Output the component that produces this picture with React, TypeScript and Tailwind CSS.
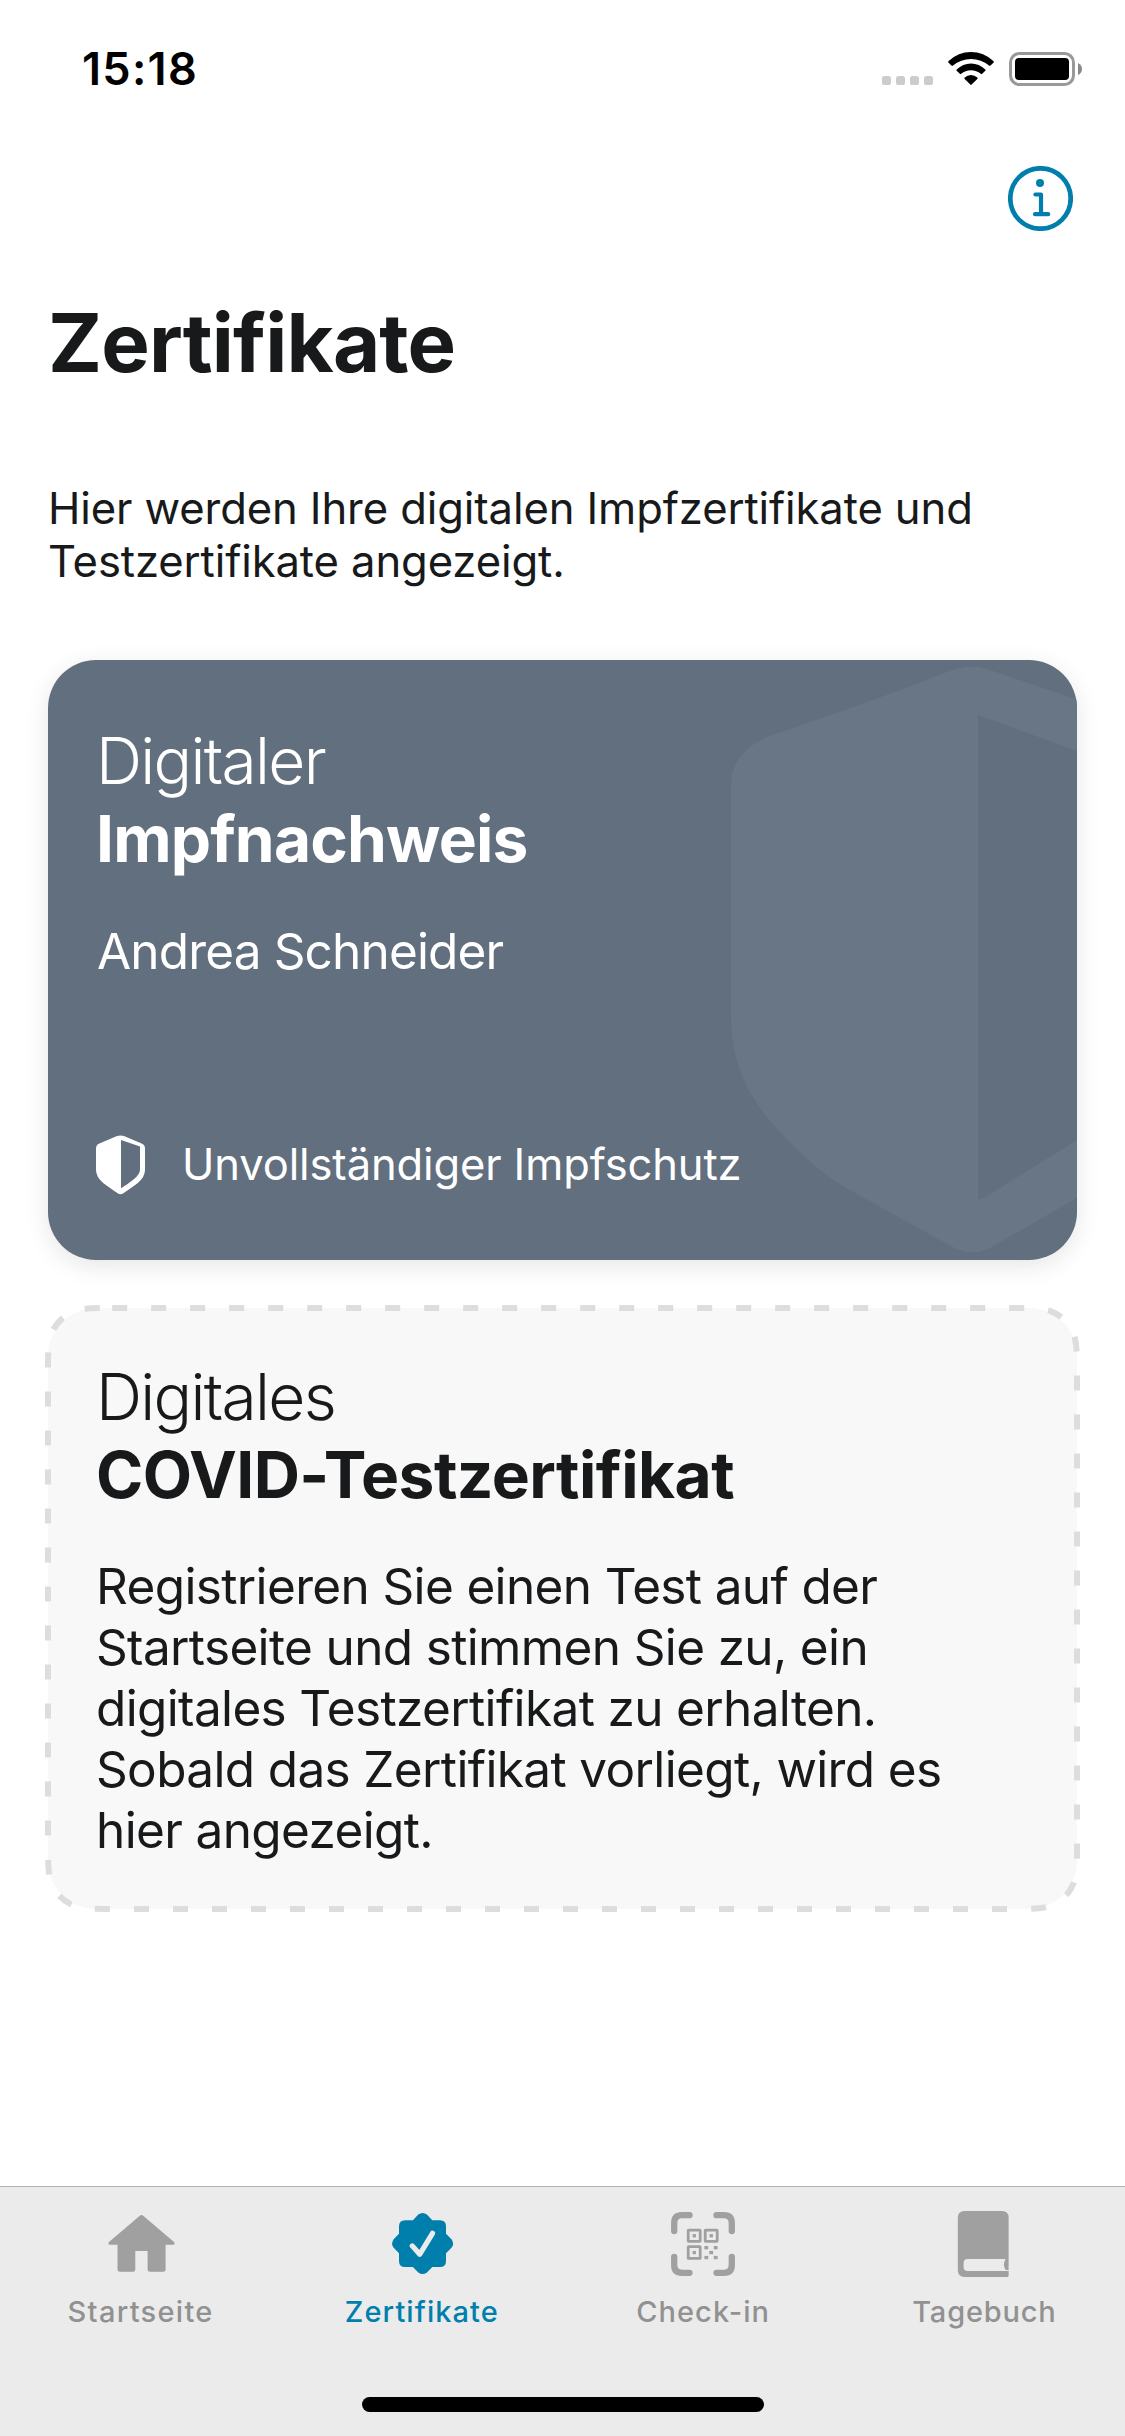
import type { ReactNode } from 'react';

function StatusBar() {
  return (
    <div className="flex h-[166px] items-start justify-between">
      <time className="pt-[39px] pl-[82px] text-[45px] leading-[60px] font-semibold tracking-[1.3px] text-black">15:18</time>
      <div className="flex items-start pt-[52px] pr-[42px]">
        <svg className="mt-6 h-[9px] w-[51px]" viewBox="0 0 51 9" fill="#cccccc">
          <rect x="0" width="9" height="9" rx="2.6" />
          <rect x="14" width="9" height="9" rx="2.6" />
          <rect x="28" width="9" height="9" rx="2.6" />
          <rect x="42" width="9" height="9" rx="2.6" />
        </svg>
        <svg className="ml-[15px] h-[33px] w-[46px]" viewBox="0 0 46 33" fill="#000">
          <path d="M0.6 9.1 Q10.2 0 23 0 Q35.8 0 45.4 9.1 Q46.2 9.9 45.4 10.7 L42.5 13.6 Q41.8 14.3 41 13.6 Q33.3 6.9 23 6.9 Q12.7 6.9 5 13.6 Q4.2 14.3 3.5 13.6 L0.6 10.7 Q-0.2 9.9 0.6 9.1Z" />
          <path d="M8.7 17.4 Q14.8 11.4 23 11.4 Q31.2 11.4 37.3 17.4 Q38 18.1 37.3 18.8 L34.2 21.8 Q33.5 22.5 32.8 21.8 Q28.6 18.2 23 18.2 Q17.4 18.2 13.2 21.8 Q12.5 22.5 11.8 21.8 L8.7 18.8 Q8 18.1 8.7 17.4Z" />
          <path d="M16.7 25.5 Q19.5 23 23 23 Q26.5 23 29.3 25.5 Q30 26.2 29.3 26.9 L23.7 32.5 Q23 33.2 22.3 32.5 L16.7 26.9 Q16 26.2 16.7 25.5Z" />
        </svg>
        <svg className="ml-[15px] h-[34px] w-[74px]" viewBox="0 0 74 34">
          <rect x="1.5" y="1.5" width="63" height="31" rx="9" fill="none" stroke="#999999" strokeWidth="3" />
          <rect x="6" y="6" width="54" height="22" rx="4" fill="#000" />
          <path d="M69 11 Q73 13 73 17 Q73 21 69 23Z" fill="#888888" />
        </svg>
      </div>
    </div>
  );
}

function InfoIcon() {
  return (
    <svg className="h-[65px] w-[65px]" viewBox="0 0 65 65" fill="none" stroke="#007fad" strokeLinecap="round" strokeLinejoin="round">
      <circle cx="32.5" cy="32.5" r="30.2" strokeWidth="4.7" />
      <circle cx="32" cy="17" r="4" fill="#007fad" stroke="none" />
      <path d="M27.4 28.5 H33 V48.2 M27 48.2 H40.2" strokeWidth="4.2" />
    </svg>
  );
}

function ShieldWatermark() {
  return (
    <svg className="absolute top-0 right-0 h-[600px] w-[346px]" viewBox="683 0 346 600" fill="#697685">
      <path
        fillRule="evenodd"
        d="M683 125 Q683 93 719 77 C760 63 850 32 899 12 Q924 2 945 11 L1029 39.5 L1115 72 V540 L1029 538 L942 588 Q922 598 899 584 L809 534 C768 512 748 488 729 469 C700 437 683 402 683 357Z M930 55 V539 H934 L1029 480 V91Z"
      />
    </svg>
  );
}

function ShieldIcon() {
  return (
    <svg className="h-[60px] w-[49px]" viewBox="0 0 49 60" fill="#fff">
      <path
        fillRule="evenodd"
        d="M0 13.5 Q0 9.8 3.4 8.5 L21 1 Q24.5 0 28 1 L45.6 8.5 Q49 9.8 49 13.5 V35 Q49 42 41.5 48.3 Q36 52.5 27 58.5 Q24.5 60 22 58.5 Q13 52.5 7.5 48.3 Q0 42 0 35Z M25 5 V53.3 Q32 49 37.5 44.5 Q44 39.3 44 34.5 V11.5Z"
      />
    </svg>
  );
}

/* Dashed outline with continuous-curvature corners, centred on the card edge. */
function DashedOutline() {
  return (
    <svg className="pointer-events-none absolute inset-0 h-[601px] w-[1029px] overflow-visible" viewBox="0 0 1029 601" fill="none">
      <path
        d="M64.2 0 H964.8 C983.3 0 992.5 0 1002.5 3.1 C1013.3 7.1 1021.9 15.7 1025.9 26.5 C1029 36.5 1029 45.7 1029 64.2 V536.8 C1029 555.3 1029 564.5 1025.9 574.5 C1021.9 585.3 1013.3 593.9 1002.5 597.9 C992.5 601 983.3 601 964.8 601 H64.2 C45.7 601 36.5 601 26.5 597.9 C15.7 593.9 7.1 585.3 3.1 574.5 C0 564.5 0 555.3 0 536.8 V64.2 C0 45.7 0 36.5 3.1 26.5 C7.1 15.7 15.7 7.1 26.5 3.1 C36.5 0 45.7 0 64.2 0"
        stroke="#dddddd"
        strokeWidth="6"
        strokeDasharray="15 24"
      />
    </svg>
  );
}

const iconClass = 'h-20 w-20';

function HomeIcon() {
  return (
    <svg className={iconClass} viewBox="0 0 80 80" fill="#a0a0a0">
      <path d="M38.5 11.9 Q40.5 10.3 42.5 11.9 L73 38 Q74.5 39.8 72.5 40.7 H64.6 V65.2 Q64.6 67.7 62.1 67.7 H49.1 Q46.6 67.7 46.6 65.2 V47 H34.3 V65.2 Q34.3 67.7 31.8 67.7 H19 Q16.5 67.7 16.5 65.2 V40.7 H8.5 Q6.5 39.8 8 38Z" />
    </svg>
  );
}

function BadgeIcon() {
  return (
    <svg className={iconClass} viewBox="0 0 80 80">
      <path
        d="M36.3 10.6 Q40.6 7.4 44.9 10.6 L50.3 16.3 H58 Q64 16.3 64 22.3 V29.8 L69.5 35.2 Q72.7 39.5 69.5 43.8 L64 49.2 V57 Q64 63 58 63 H50.3 L44.9 68.4 Q40.6 71.6 36.3 68.4 L30.9 63 H23 Q17 63 17 57 V49.2 L11.7 43.8 Q8.5 39.5 11.7 35.2 L17 29.8 V22.3 Q17 16.3 23 16.3 H30.9Z"
        fill="#007fad"
      />
      <path d="M30.3 41.9 L37.7 50.3 L50.5 29.3" fill="none" stroke="#ebebeb" strokeWidth="5.2" strokeLinecap="round" strokeLinejoin="round" />
    </svg>
  );
}

function ScanIcon() {
  return (
    <svg className={iconClass} viewBox="0 0 80 80" fill="none" stroke="#a0a0a0">
      <path d="M11.2 27 V19 Q11.2 11.2 19 11.2 H26.5 M53.5 11.2 H61 Q68.8 11.2 68.8 19 V27 M68.8 53 V61 Q68.8 68.8 61 68.8 H53.5 M26.5 68.8 H19 Q11.2 68.8 11.2 61 V53" strokeWidth="6.3" strokeLinecap="round" />
      <g strokeWidth="2.8">
        <rect x="25.2" y="26.1" width="12" height="11.2" rx="0.5" />
        <rect x="42.2" y="26.1" width="12" height="11.2" rx="0.5" />
        <rect x="25.2" y="42.6" width="12" height="11.8" rx="0.5" />
      </g>
      <g fill="#a0a0a0" stroke="none">
        <rect x="29.6" y="30.1" width="3.3" height="3.3" />
        <rect x="46.6" y="30.1" width="3.3" height="3.3" />
        <rect x="29.6" y="46.9" width="3.3" height="3.3" />
        <rect x="41.4" y="42" width="3.8" height="3.3" />
        <rect x="50.8" y="42" width="3.8" height="3.3" />
        <rect x="46.3" y="46.9" width="3.8" height="3.3" />
        <rect x="41.4" y="51.9" width="3.8" height="3.3" />
        <rect x="50.8" y="51.9" width="3.8" height="3.3" />
      </g>
    </svg>
  );
}

function BookIcon() {
  return (
    <svg className={iconClass} viewBox="0 0 80 80">
      <path d="M20.8 7 H58 Q64.6 7 64.6 13.5 V71.5 Q64.6 73 63 73 H20.8 Q13.8 73 13.8 66 V14 Q13.8 7 20.8 7Z" fill="#a0a0a0" />
      <path d="M23.6 55 H61.6 Q58.3 60.5 61.6 66 H64.8 V67 H23.6 Q19.6 67 19.6 63 V59 Q19.6 55 23.6 55Z" fill="#ebebeb" />
    </svg>
  );
}

function Tab({ icon, label, className }: { icon: ReactNode; label: string; className: string }) {
  return (
    <div className={`flex flex-col items-center pt-[17px] ${className}`}>
      {icon}
      <span className="mt-[10px] text-[29px] leading-9 font-medium">{label}</span>
    </div>
  );
}

export default function App() {
  return (
    <div className="flex h-[2436px] w-[1125px] flex-col overflow-hidden bg-white font-['Inter',sans-serif] text-[#17191a]">
      <StatusBar />
      <div className="flex justify-end pr-[52px]">
        <InfoIcon />
      </div>

      <main className="flex flex-1 flex-col px-12">
        <h1 className="mt-[63px] text-[81.5px] leading-[98px] font-bold tracking-[-0.87px]">Zertifikate</h1>
        <p className="mt-[90px] h-[106px] text-[43.6px] leading-[53px] tracking-[-0.11px] whitespace-nowrap">
          Hier werden Ihre digitalen Impfzertifikate und
          <br />
          Testzertifikate angezeigt.
        </p>

        <section className="relative mt-[72px] flex h-[600px] flex-col overflow-hidden rounded-[48px] bg-[#616f7e] px-12 pt-[61.7px] text-white shadow-[0_6px_24px_rgba(0,0,0,0.1)]">
          <ShieldWatermark />
          <h2 className="relative text-[64px] leading-[78px]">
            <span className="block font-light tracking-[-1.69px]">Digitaler</span>
            <span className="block font-bold tracking-[-0.83px]">Impfnachweis</span>
          </h2>
          <p className="relative mt-[43.3px] pl-px text-[49.5px] leading-[60px] tracking-[-0.84px]">Andrea Schneider</p>
          <div className="relative mt-auto flex items-start gap-[37px] pb-[65px]">
            <ShieldIcon />
            <p className="pt-[2px] text-[43.5px] leading-[54px] tracking-[-0.12px]">Unvollständiger Impfschutz</p>
          </div>
        </section>

        <section className="relative mt-12 flex h-[601px] flex-col rounded-[48px] bg-[#f8f8f8] px-12 pt-[49.7px]">
          <DashedOutline />
          <h2 className="text-[64px] leading-[78px]">
            <span className="block font-light tracking-[-1.69px]">Digitales</span>
            <span className="block font-bold tracking-[-0.54px]">COVID-Testzertifikat</span>
          </h2>
          <p className="mt-[42.8px] text-[49.5px] leading-[60.85px] tracking-[-0.64px] whitespace-nowrap">
            Registrieren Sie einen Test auf der
            <br />
            Startseite und stimmen Sie zu, ein
            <br />
            digitales Testzertifikat zu erhalten.
            <br />
            Sobald das Zertifikat vorliegt, wird es
            <br />
            hier angezeigt.
          </p>
        </section>
      </main>

      <footer className="flex h-[250px] flex-col items-center border-t border-[#b2b2b2] bg-[#ebebeb]">
        <nav className="grid h-[210px] w-full grid-cols-4">
          <Tab icon={<HomeIcon />} label="Startseite" className="tracking-[1.3px] text-[#919191]" />
          <Tab icon={<BadgeIcon />} label="Zertifikate" className="tracking-[1.08px] text-[#007fad]" />
          <Tab icon={<ScanIcon />} label="Check-in" className="tracking-[1.07px] text-[#919191]" />
          <Tab icon={<BookIcon />} label="Tagebuch" className="tracking-[0.8px] text-[#919191]" />
        </nav>
        <div className="h-[15px] w-[402px] rounded-full bg-black" />
      </footer>
    </div>
  );
}
